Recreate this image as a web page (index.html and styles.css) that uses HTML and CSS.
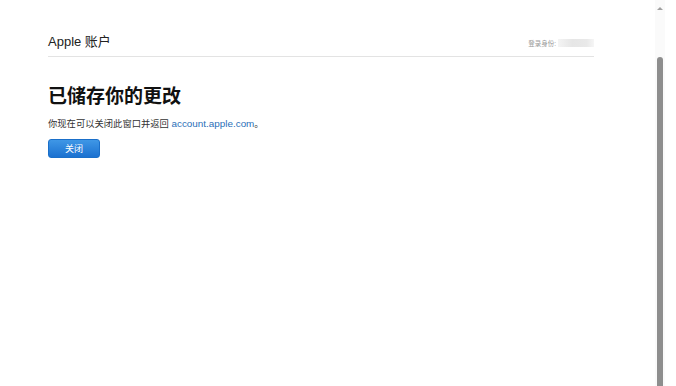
FILE: index.html
```html
<!DOCTYPE html>
<html lang="zh-CN">
<head>
<meta charset="utf-8">
<title>Apple 账户</title>
<link rel="stylesheet" href="styles.css">
</head>
<body>
<div class="page">
  <main class="main">
    <header class="header">
      <div class="brand">Apple 账户</div>
      <div class="signed">登录身份:<span class="blur"></span></div>
    </header>
    <section class="content">
      <h1 class="title">已储存你的更改</h1>
      <p class="desc">你现在可以关闭此窗口并返回 <a class="link" href="#">account.apple.com</a>。</p>
      <button class="btn" type="button">关闭</button>
    </section>
  </main>
  <div class="scrollbar">
    <div class="arrow"></div>
    <div class="thumb"></div>
  </div>
</div>
</body>
</html>
```
FILE: styles.css
```css
* { box-sizing: border-box; }
html, body { margin: 0; padding: 0; background: #fff; }
body {
  font-family: "Liberation Sans", "Noto Sans CJK SC", Arial, sans-serif;
  color: #1d1d1f;
  width: 676px;
  height: 386px;
  overflow: hidden;
}
.page {
  display: flex;
  height: 386px;
}
.main {
  flex: 1;
  padding: 0 0 0 48px;
}
.header {
  width: 546px;
  height: 57px;
  border-bottom: 1px solid #e3e3e3;
  display: flex;
  justify-content: space-between;
  align-items: flex-end;
  padding-bottom: 6px;
}
.brand {
  font-size: 13px;
  color: #222;
  line-height: 16px;
}
.signed {
  font-size: 6.5px;
  color: #999;
  display: flex;
  align-items: center;
  padding-bottom: 2px;
}
.blur {
  display: inline-block;
  width: 36px;
  height: 8px;
  margin-left: 2px;
  background: linear-gradient(90deg, #f4f4f4, #e6e6e6 40%, #e9e9e9 80%, #f6f6f6);
}
.content {
  padding-top: 29px;
}
.title {
  margin: 0;
  font-size: 19px;
  font-weight: 700;
  line-height: 22px;
  color: #111;
}
.desc {
  margin: 10px 0 0;
  font-size: 9.3px;
  line-height: 12px;
  color: #333;
}
.link {
  color: #2a6fb8;
  text-decoration: none;
  font-size: 9.9px;
}
.btn {
  margin-top: 9px;
  width: 52px;
  height: 19px;
  border: 1px solid #1a6fc9;
  border-radius: 3px;
  background: linear-gradient(#3f97e6, #1b71d0);
  color: #fff;
  font-family: inherit;
  font-size: 9px;
  padding: 0;
  display: block;
}
.scrollbar {
  width: 10px;
  margin-right: 11px;
  background: #fafafa;
  display: flex;
  flex-direction: column;
  align-items: center;
}
.arrow {
  margin-top: 7px;
  width: 0;
  height: 0;
  border-left: 3px solid transparent;
  border-right: 3px solid transparent;
  border-bottom: 3px solid #a0a0a0;
}
.thumb {
  margin-top: 47px;
  width: 6px;
  flex: 1;
  background: #8e8e8e;
  border-radius: 3px 3px 0 0;
}
```
